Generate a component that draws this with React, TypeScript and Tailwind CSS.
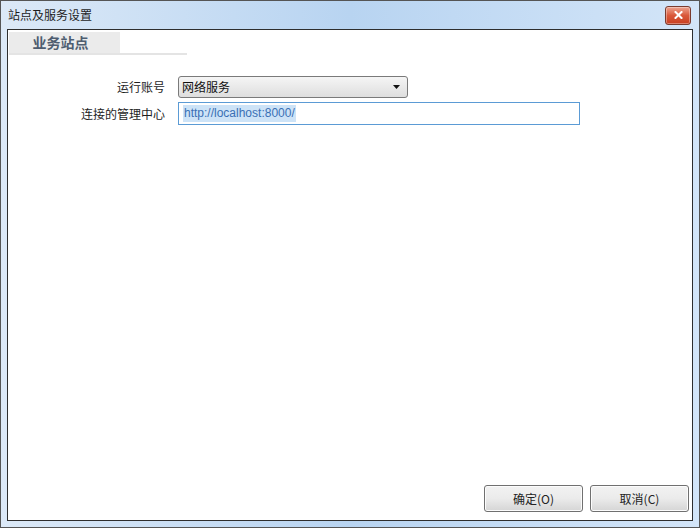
import React from "react";

const cjk = { fontFamily: '"Noto Sans CJK SC", "Liberation Sans", sans-serif' };

function CloseButton() {
  return (
    <div className="w-[26px] h-[19px] rounded-[3px] border border-[#7a3b2e] bg-gradient-to-b from-[#eba28e] via-[#d9583a] to-[#c83f1f] flex items-center justify-center shadow-[inset_0_0_0_1px_rgba(255,255,255,0.35)]">
      <svg width="9" height="8" viewBox="0 0 9 8">
        <path d="M1.5 1 L7.5 7 M7.5 1 L1.5 7" stroke="#fff" strokeWidth="2" strokeLinecap="square" />
      </svg>
    </div>
  );
}

function WinButton({ children }: { children: React.ReactNode }) {
  return (
    <button
      type="button"
      className="w-[99px] h-[27px] rounded-[3px] border border-[#707070] bg-gradient-to-b from-[#f2f2f2] via-[#ebebeb] to-[#d5d5d5] text-[12px] text-[#222] shadow-[inset_0_0_0_1px_#fcfcfc]"
      style={cjk}
    >
      {children}
    </button>
  );
}

export default function App() {
  return (
    <div className="w-[700px] h-[528px] flex flex-col border border-[#555] bg-gradient-to-r from-[#dce9f7] via-[#b8d4f1] to-[#d3e5f8] overflow-hidden" style={cjk}>
      {/* Title bar */}
      <div className="h-[28px] flex items-center justify-between pl-[7px] pr-[8px] shrink-0">
        <span className="text-[12px] text-[#1e1e1e]">站点及服务设置</span>
        <CloseButton />
      </div>

      {/* Client area */}
      <div className="flex-1 mx-[6px] mb-[6px] border border-[#2e2e2e] bg-white flex flex-col">
        {/* Tab header */}
        <div className="pt-[2px] pl-[1px]">
          <div className="w-[178px] border-b-[2px] border-[#e4e4e4]">
            <div className="w-[111px] h-[21px] bg-[#ebebeb] flex items-center justify-center">
              <span className="text-[14px] font-bold text-[#4e5d70] ml-[-8px]">业务站点</span>
            </div>
          </div>
        </div>

        {/* Form */}
        <div className="mt-[21px] flex flex-col gap-[4px]">
          <div className="flex items-center">
            <span className="w-[157px] text-right text-[12px] text-[#1e1e1e]">运行账号</span>
            <div className="ml-[13px] w-[230px] h-[22px] rounded-[3px] border border-[#7a7a7a] bg-gradient-to-b from-[#f5f5f5] to-[#dedede] flex items-center justify-between pl-[3px] pr-[7px]">
              <span className="text-[12px] text-[#111]">网络服务</span>
              <svg width="7" height="4" viewBox="0 0 7 4">
                <path d="M0 0 H7 L3.5 4 Z" fill="#111" />
              </svg>
            </div>
          </div>
          <div className="flex items-center">
            <span className="w-[157px] text-right text-[12px] text-[#1e1e1e]">连接的管理中心</span>
            <div className="ml-[13px] w-[402px] h-[23px] border border-[#5b9bd5] bg-white flex items-center pl-[4px]">
              <span className="bg-[#cde3f7] text-[12px] text-[#3a70b5] leading-[17px] px-[1px]" style={{ fontFamily: '"Liberation Sans", Arial, sans-serif' }}>
                http://localhost:8000/
              </span>
            </div>
          </div>
        </div>

        <div className="flex-1" />

        {/* Buttons */}
        <div className="flex justify-end gap-[7px] pr-[3px] pb-[8px]">
          <WinButton>确定(O)</WinButton>
          <WinButton>取消(C)</WinButton>
        </div>
      </div>
    </div>
  );
}
